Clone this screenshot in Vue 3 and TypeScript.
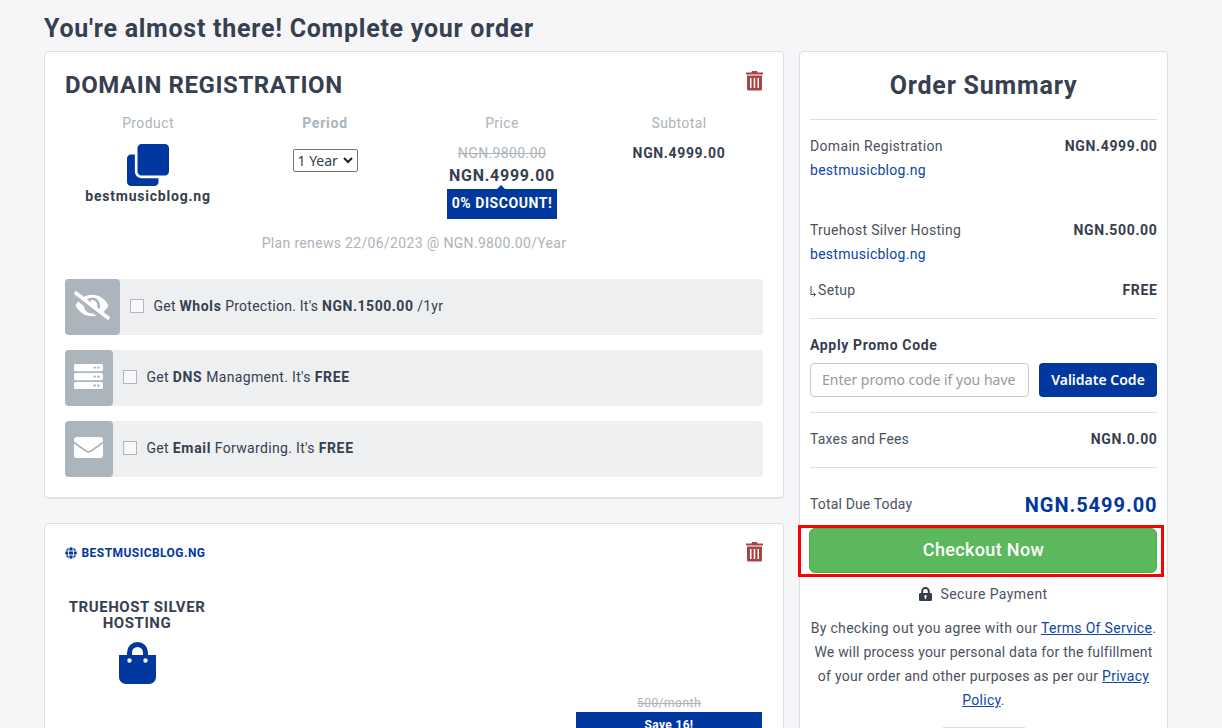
<script setup lang="ts">
import { ref } from 'vue';

interface Addon {
  icon: 'eye' | 'server' | 'mail';
  name: string;
  label: string;
  price: string;
  suffix?: string;
}

const addons: Addon[] = [
  { icon: 'eye', name: 'WhoIs', label: "Protection. It's", price: 'NGN.1500.00', suffix: '/1yr' },
  { icon: 'server', name: 'DNS', label: "Managment. It's", price: 'FREE' },
  { icon: 'mail', name: 'Email', label: "Forwarding. It's", price: 'FREE' },
];

const selected = ref<string[]>([]);
const promoCode = ref('');
const period = ref('1');
</script>

<template>
  <div class="checkout-page">
    <h1 class="page-title">You're almost there! Complete your order</h1>
    <div class="columns">
      <main class="cart">
        <section class="card domain-card">
          <header class="card-header">
            <h2>DOMAIN REGISTRATION</h2>
            <button class="trash" type="button" aria-label="Remove">
              <svg viewBox="0 0 17 20" width="17" height="20">
                <path fill-rule="evenodd" d="M0 1.500h5.500L6 0h5l.5 1.500H17v2H0zM1 4.500h15V18a1.500 1.500 0 0 1-1.500 1.500H2.500A1.500 1.500 0 0 1 1 18zM4 7v10h1.500V7zM7.700 7v10h1.500V7zM11.500 7v10H13V7z" />
              </svg>
            </button>
          </header>

          <div class="item-grid">
            <div class="col">
              <span class="col-label">Product</span>
              <svg class="clone-icon" viewBox="0 0 512 512" width="42" height="42">
                <path d="M464 0c26.510 0 48 21.490 48 48v288c0 26.510-21.490 48-48 48H176c-26.510 0-48-21.490-48-48V48c0-26.510 21.490-48 48-48h288M176 416c-44.112 0-80-35.888-80-80V128H48c-26.510 0-48 21.490-48 48v288c0 26.510 21.490 48 48 48h288c26.510 0 48-21.490 48-48v-48H176z" />
              </svg>
              <strong class="product-name">bestmusicblog.ng</strong>
            </div>
            <div class="col">
              <span class="col-label bold">Period</span>
              <div class="select-wrap">
                <select v-model="period">
                  <option value="1">1 Year</option>
                </select>
                <svg class="chevron" viewBox="0 0 10 7" width="10" height="7"><path d="M1 1l4 4 4-4" /></svg>
              </div>
            </div>
            <div class="col">
              <span class="col-label">Price</span>
              <s class="old-price">NGN.9800.00</s>
              <strong class="price">NGN.4999.00</strong>
              <span class="discount">0% DISCOUNT!</span>
            </div>
            <div class="col">
              <span class="col-label">Subtotal</span>
              <strong class="subtotal">NGN.4999.00</strong>
            </div>
          </div>

          <p class="renewal">Plan renews 22/06/2023 @ NGN.9800.00/Year</p>

          <div class="addons">
            <label v-for="addon in addons" :key="addon.name" class="addon">
              <span class="addon-icon" :class="'icon-' + addon.icon">
                <svg v-if="addon.icon === 'eye'" viewBox="0 0 640 512" width="36" height="29">
                  <path d="M320 400c-75.850 0-137.250-58.710-142.900-133.110L72.200 185.820c-13.790 17.300-26.480 35.590-36.720 55.590a32.350 32.350 0 0 0 0 29.190C89.710 376.410 197.070 448 320 448c26.910 0 52.870-4 77.890-10.460L346 397.390a144.130 144.130 0 0 1-26 2.610zm313.820 58.100l-110.550-85.440a331.250 331.250 0 0 0 81.250-102.070 32.350 32.350 0 0 0 0-29.190C550.290 135.590 442.930 64 320 64a308.150 308.150 0 0 0-147.320 37.700L45.460 3.370A16 16 0 0 0 23 6.180L3.370 31.450A16 16 0 0 0 6.180 53.900l588.360 454.730a16 16 0 0 0 22.460-2.810l19.640-25.270a16 16 0 0 0-2.820-22.450zm-183.720-142l-39.300-30.380A94.750 94.750 0 0 0 416 256a94.760 94.760 0 0 0-121.310-92.210A47.650 47.650 0 0 1 304 192a46.640 46.640 0 0 1-1.540 10l-73.610-56.890A142.310 142.310 0 0 1 320 112a143.920 143.920 0 0 1 144 144c0 21.630-5.290 41.790-13.900 60.110z" />
                </svg>
                <svg v-else-if="addon.icon === 'server'" viewBox="0 0 29 25" width="29" height="25">
                  <rect width="29" height="7.200" rx="1.600" />
                  <rect y="9" width="29" height="7.200" rx="1.600" />
                  <rect y="18" width="29" height="7" rx="1.600" />
                  <g class="server-dots">
                    <circle cx="20.700" cy="3.600" r="1.200" /><circle cx="24.400" cy="3.600" r="1.200" />
                    <circle cx="20.700" cy="12.600" r="1.200" /><circle cx="24.400" cy="12.600" r="1.200" />
                    <circle cx="20.700" cy="21.500" r="1.200" /><circle cx="24.400" cy="21.500" r="1.200" />
                  </g>
                </svg>
                <svg v-else viewBox="0 64 512 384" width="29" height="21" preserveAspectRatio="none">
                  <path d="M502.300 190.800c3.900-3.100 9.700-.2 9.700 4.700V400c0 26.500-21.500 48-48 48H48c-26.500 0-48-21.500-48-48V195.600c0-5 5.700-7.800 9.700-4.700 22.400 17.400 52.100 39.500 154.100 113.600 21.100 15.400 56.700 47.800 92.200 47.600 35.700.3 72-32.800 92.300-47.600 102-74.100 131.600-96.300 154-113.700zM256 320c23.200.4 56.600-29.200 73.400-41.400 132.700-96.300 142.800-104.700 173.400-128.700 5.800-4.500 9.200-11.500 9.200-18.900v-19c0-26.500-21.500-48-48-48H48c-26.500 0-48 21.500-48 48v19c0 7.400 3.400 14.300 9.200 18.900 30.600 23.900 40.700 32.400 173.400 128.700 16.800 12.200 50.200 41.800 73.400 41.400z" />
                </svg>
              </span>
              <input v-model="selected" type="checkbox" :value="addon.name" />
              <span class="addon-text">Get <b>{{ addon.name }}</b> {{ addon.label }} <b>{{ addon.price }}</b> {{ addon.suffix }}</span>
            </label>
          </div>
        </section>

        <section class="card hosting-card">
          <header class="card-header">
            <h3>
              <svg viewBox="0 0 12 12" width="12" height="12">
                <circle cx="6" cy="6" r="5.800" />
                <path d="M0 4h12M0 8h12M4.200 0Q2.800 6 4.200 12M7.800 0Q9.200 6 7.800 12" />
              </svg>
              <span>BESTMUSICBLOG.NG</span>
            </h3>
            <button class="trash" type="button" aria-label="Remove">
              <svg viewBox="0 0 17 20" width="17" height="20">
                <path fill-rule="evenodd" d="M0 1.500h5.500L6 0h5l.5 1.500H17v2H0zM1 4.500h15V18a1.500 1.500 0 0 1-1.500 1.500H2.500A1.500 1.500 0 0 1 1 18zM4 7v10h1.500V7zM7.700 7v10h1.500V7zM11.500 7v10H13V7z" />
              </svg>
            </button>
          </header>
          <div class="plan">
            <div class="plan-product">
              <h4>TRUEHOST SILVER HOSTING</h4>
              <svg viewBox="0 0 37 42" width="37" height="42">
                <path class="handle" d="M10.500 14V10.500a8 8 0 0 1 16 0V14" />
                <path fill-rule="evenodd" d="M0 13h37v22a7 7 0 0 1-7 7H7a7 7 0 0 1-7-7zM10.500 16.300a2.200 2.200 0 1 0 0 4.400 2.200 2.200 0 0 0 0-4.400zM26.500 16.300a2.200 2.200 0 1 0 0 4.400 2.200 2.200 0 0 0 0-4.400z" />
              </svg>
            </div>
            <div class="plan-price">
              <s>500/month</s>
              <span class="save">Save 16!</span>
            </div>
          </div>
        </section>
      </main>

      <aside class="card summary">
        <h2>Order Summary</h2>
        <div class="summary-item first">
          <div class="line"><span>Domain Registration</span><b>NGN.4999.00</b></div>
          <a>bestmusicblog.ng</a>
        </div>
        <div class="summary-item second">
          <div class="line"><span>Truehost Silver Hosting</span><b>NGN.500.00</b></div>
          <a>bestmusicblog.ng</a>
        </div>
        <div class="line setup">
          <span><svg viewBox="0 0 8 12" width="8" height="12"><path d="M1 0v8.500h4.500M3.500 6.500l2 2-2 2" /></svg>Setup</span>
          <b>FREE</b>
        </div>
        <div class="promo">
          <strong>Apply Promo Code</strong>
          <div class="promo-form">
            <input v-model="promoCode" type="text" placeholder="Enter promo code if you have" />
            <button type="button">Validate Code</button>
          </div>
        </div>
        <div class="line taxes"><span>Taxes and Fees</span><b>NGN.0.00</b></div>
        <div class="line total"><span>Total Due Today</span><b>NGN.5499.00</b></div>
        <div class="checkout">
          <button type="button">Checkout Now</button>
          <div class="highlight"></div>
        </div>
        <div class="secure">
          <svg viewBox="0 0 13 14" width="13" height="14">
            <path class="shackle" d="M3.200 7V4.200a3.300 3.300 0 0 1 6.600 0V7" />
            <path fill-rule="evenodd" d="M1.300 6h10.400A1.300 1.300 0 0 1 13 7.300v5.400a1.300 1.300 0 0 1-1.300 1.300H1.300A1.300 1.300 0 0 1 0 12.700V7.300A1.300 1.300 0 0 1 1.300 6zM6.500 8a1.300 1.300 0 0 0-.7 2.400V12h1.400v-1.600A1.300 1.300 0 0 0 6.500 8z" />
          </svg>
          <span>Secure Payment</span>
        </div>
        <p class="terms">
          <span class="agree">By checking out you agree with our <a>Terms Of Service</a>.</span><br />
          <span>We will process your personal data for the fulfillment</span><br />
          <span class="purposes">of your order and other purposes as per our <a>Privacy</a></span><br />
          <span class="agree"><a>Policy</a>.</span>
        </p>
        <div class="badge-edge"></div>
      </aside>
    </div>
  </div>
</template>

<style>
body {
  background: #f6f6f9;
  overflow: hidden;
}
</style>

<style scoped>
.checkout-page {
  box-sizing: border-box;
  height: 728px;
  overflow: hidden;
  padding: 0 54px 0 44px;
  font-family: Roboto, 'Open Sans', sans-serif;
  font-size: 14px;
  color: #36404f;
  letter-spacing: 0.33px;
}

.checkout-page * {
  box-sizing: border-box;
}

b,
strong {
  letter-spacing: 0.65px;
}

h1, h2, h3, h4, p {
  margin: 0;
  white-space: nowrap;
}

.page-title {
  height: 51px;
  padding-top: 13px;
  line-height: 32px;
  font-size: 25px;
  font-weight: 700;
  letter-spacing: 0.74px;
}

.columns {
  display: grid;
  grid-template-columns: 740px 369px;
  gap: 15px;
  align-items: start;
}

.card {
  background: #fff;
  border: 1px solid #dcdfe2;
  border-radius: 4px;
  box-shadow: 0 1px 1px rgba(0, 0, 0, 0.06);
}

.cart {
  display: flex;
  flex-direction: column;
  gap: 25px;
}

.domain-card {
  height: 447px;
  padding: 19px 20px;
}

.hosting-card {
  height: 300px;
  padding: 18px 20px;
}

.card-header {
  display: flex;
  justify-content: space-between;
  height: 41px;
}

.card-header h2 {
  font-size: 24px;
  font-weight: 700;
  line-height: 28px;
  letter-spacing: 0.58px;
}

.trash {
  width: 17px;
  height: 20px;
  padding: 0;
  border: 0;
  background: none;
}

.trash svg {
  display: block;
  fill: #a94442;
}

.item-grid {
  display: grid;
  grid-template-columns: repeat(4, 177px);
  height: 120px;
  margin: 0 -5.5px;
}

.col {
  display: flex;
  flex-direction: column;
  align-items: center;
}

.col-label {
  margin-top: 1px;
  line-height: 20px;
  color: #acb4bc;
  letter-spacing: 0.4px;
}

.bold {
  font-weight: 700;
  letter-spacing: 0.75px;
}

.clone-icon {
  margin-top: 11px;
  fill: #00389f;
}

.product-name {
  line-height: 20px;
  letter-spacing: 0.78px;
}

.select-wrap {
  position: relative;
  margin-top: 16px;
}

select {
  display: block;
  width: 65px;
  height: 23px;
  padding: 0 4px;
  appearance: none;
  border: 1px solid #767676;
  border-radius: 2px;
  background: #fff;
  color: #36404f;
  font: 14px 'Noto Sans', sans-serif;
}

.chevron {
  position: absolute;
  top: 8px;
  right: 5px;
  fill: none;
  stroke: #222;
  stroke-width: 2;
}

.old-price {
  margin-top: 10px;
  line-height: 20px;
  color: #acb4bc;
  letter-spacing: 0.38px;
}

.price {
  line-height: 26px;
  font-size: 16px;
  letter-spacing: 0.75px;
}

.discount {
  position: relative;
  width: 110px;
  height: 30px;
  background: #00389f;
  color: #fff;
  line-height: 29px;
  font-weight: 700;
  letter-spacing: 0.55px;
  text-align: center;
  white-space: nowrap;
}

.discount::before {
  content: '';
  position: absolute;
  top: -4px;
  left: 50px;
  border: 4px solid transparent;
  border-top-width: 0;
  border-bottom-color: #00389f;
}

.subtotal {
  margin-top: 10px;
  line-height: 20px;
}

.renewal {
  padding-top: 1px;
  line-height: 20px;
  color: #acb4bc;
  text-align: center;
}

.addons {
  display: flex;
  flex-direction: column;
  gap: 15px;
  margin-top: 26px;
}

.addon {
  display: flex;
  align-items: center;
  height: 56px;
  border-radius: 4px;
  background: #eeeff1;
}

.addon-icon {
  display: flex;
  align-items: center;
  justify-content: center;
  width: 48px;
  height: 56px;
  padding: 0 1px 3px 0;
  border-radius: 4px;
  background: #acb5bd;
}

.icon-eye {
  width: 55px;
}

.addon-icon svg {
  fill: #fff;
}

.addon-icon .server-dots {
  fill: #acb5bd;
}

.addon input {
  width: 14px;
  height: 14px;
  margin: 0 9px 2px 10px;
  appearance: none;
  border: 1px solid #b4b6b9;
  background: #f7f8fa;
}

.addon-text {
  padding: 0 0 2px 0.5px;
}

.icon-eye ~ .addon-text {
  letter-spacing: 0.25px;
}

.icon-eye ~ .addon-text b {
  letter-spacing: 0.53px;
}

.hosting-card .card-header {
  height: 57px;
}

h3 {
  display: flex;
  align-items: center;
  gap: 5px;
  height: 21px;
  margin-left: -0.5px;
  color: #00389f;
  font-size: 12px;
  font-weight: 700;
  letter-spacing: 0.45px;
}

h3 svg {
  fill: #00389f;
}

h3 path {
  fill: none;
  stroke: #fff;
  stroke-width: 0.9;
}

.plan {
  display: flex;
  justify-content: space-between;
}

.plan-product {
  width: 144px;
  text-align: center;
}

h4 {
  line-height: 16px;
  font-size: 15px;
  font-weight: 700;
  letter-spacing: 0.57px;
  white-space: normal;
}

.plan-product svg {
  display: block;
  margin: 11px auto 0;
  fill: #00389f;
}

.plan-product .handle {
  fill: none;
  stroke: #00389f;
  stroke-width: 5;
}

.plan-price {
  display: flex;
  flex-direction: column;
  align-items: center;
  width: 186px;
  margin: 95px 1px 0 0;
  color: #acb4bc;
  font-size: 12px;
}

.plan-price s {
  line-height: 18px;
  letter-spacing: 0.5px;
}

.save {
  width: 186px;
  height: 30px;
  background: #00389f;
  color: #fff;
  line-height: 26px;
  font-weight: 700;
  text-align: center;
}

.summary {
  height: 800px;
  padding: 0 10px;
  color: #4a5260;
}

.summary b,
.summary strong {
  color: #363e4e;
}

.summary h2 {
  height: 68px;
  border-bottom: 1px solid #dcdfe2;
  color: #36404f;
  font-size: 25px;
  font-weight: 700;
  line-height: 67px;
  letter-spacing: 0.8px;
  text-align: center;
}

.line {
  display: flex;
  justify-content: space-between;
  line-height: 24px;
}

.line b {
  margin-right: -0.5px;
}

.summary-item {
  height: 84px;
  line-height: 24px;
}

.first {
  margin-top: 14px;
}

.second {
  height: 60px;
}

.second .line {
  letter-spacing: 0.27px;
}

.summary a {
  color: #0d46a5;
}

.summary-item a {
  letter-spacing: 0.27px;
}

.setup {
  height: 41px;
  border-bottom: 1px solid #dcdfe2;
}

.setup svg {
  fill: none;
  stroke: #4a5260;
  vertical-align: -3px;
}

.promo {
  height: 94px;
  padding-top: 14px;
  border-bottom: 1px solid #dcdfe2;
}

.promo strong {
  display: block;
  height: 30px;
  line-height: 24px;
}

.promo-form {
  display: flex;
  gap: 10px;
}

.promo-form input {
  width: 219px;
  height: 34px;
  padding: 0 11px 2px;
  border: 1px solid #c8cacd;
  border-radius: 4px;
  font: 14px 'Noto Sans', sans-serif;
}

.promo-form input::placeholder {
  color: #999;
}

.promo-form button {
  width: 118px;
  height: 34px;
  padding: 0 0 2px;
  border: 0;
  border-radius: 4px;
  background: #00389f;
  color: #fff;
  font: 600 14px 'Noto Sans', sans-serif;
}

.taxes {
  height: 55px;
  padding-top: 14px;
  border-bottom: 1px solid #dcdfe2;
  letter-spacing: 0.18px;
}

.total {
  height: 60px;
  padding-top: 24px;
  letter-spacing: 0.15px;
}

.summary .total b {
  color: #00389f;
  font-size: 20px;
  line-height: 26px;
  letter-spacing: 0.95px;
}

.checkout {
  position: relative;
  height: 46px;
  margin-left: -1px;
}

.checkout button {
  display: block;
  width: 100%;
  height: 45px;
  padding: 0 0 3px 1px;
  border: 1px solid #4cae4c;
  border-radius: 6px;
  background: #5cb85c;
  color: #fff;
  font: 500 18px Roboto, sans-serif;
  letter-spacing: 0.35px;
}

.highlight {
  position: absolute;
  top: -3px;
  left: -11px;
  width: 366px;
  height: 52px;
  border: 3px solid #f00;
}

.secure {
  display: flex;
  align-items: center;
  justify-content: center;
  gap: 8px;
  height: 24px;
  margin-top: 8px;
  letter-spacing: 0.42px;
}

.secure svg {
  fill: #363e4e;
}

.secure .shackle {
  fill: none;
  stroke: #363e4e;
  stroke-width: 2;
}

.terms {
  margin-top: 10px;
  line-height: 24px;
  letter-spacing: 0.21px;
  text-align: center;
}

.terms a {
  text-decoration: underline;
}

.agree {
  letter-spacing: 0.31px;
}

.purposes {
  letter-spacing: 0.26px;
}

.badge-edge {
  width: 82px;
  height: 20px;
  margin: 15px auto 0;
  border-top: 1px solid #dcdfe2;
}
</style>
